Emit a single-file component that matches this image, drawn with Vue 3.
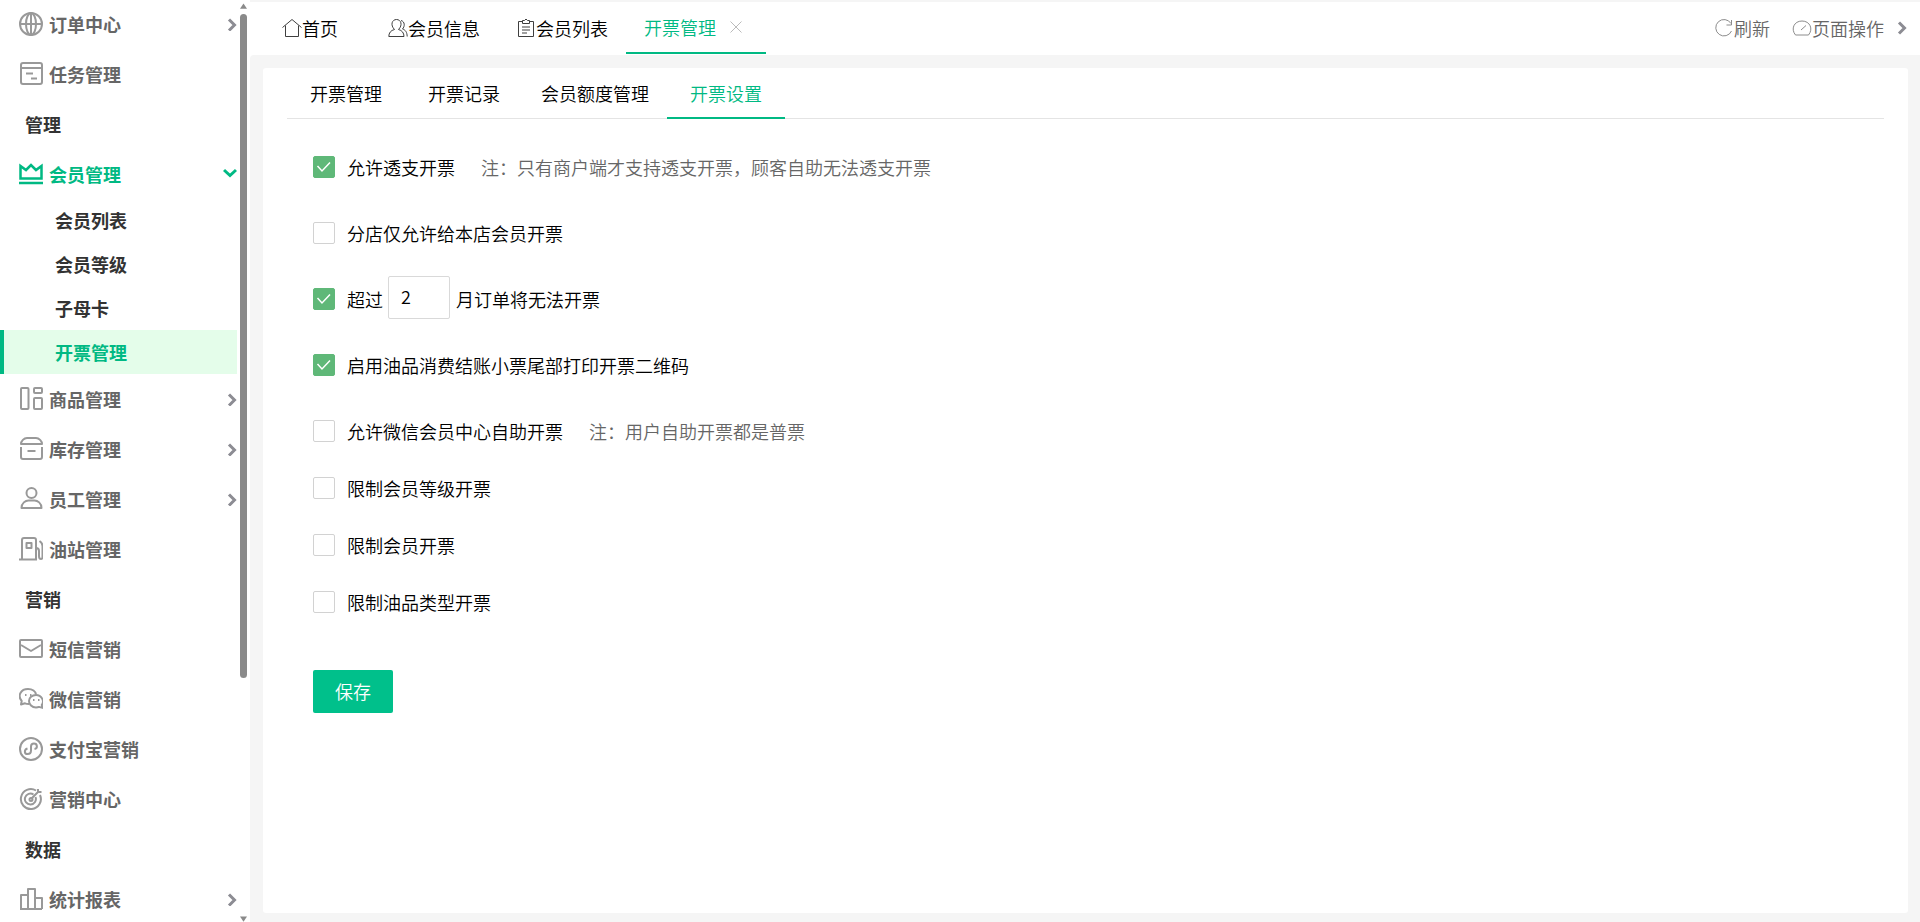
<script setup>
import { reactive, ref } from 'vue'

const menu = [
  { icon: 'globe', label: '订单中心', arrow: true },
  { icon: 'task', label: '任务管理' },
  { title: '管理' },
  {
    icon: 'crown',
    label: '会员管理',
    open: true,
    children: ['会员列表', '会员等级', '子母卡', '开票管理'],
  },
  { icon: 'goods', label: '商品管理', arrow: true },
  { icon: 'stock', label: '库存管理', arrow: true },
  { icon: 'staff', label: '员工管理', arrow: true },
  { icon: 'pump', label: '油站管理' },
  { title: '营销' },
  { icon: 'mail', label: '短信营销' },
  { icon: 'wechat', label: '微信营销' },
  { icon: 'alipay', label: '支付宝营销' },
  { icon: 'target', label: '营销中心' },
  { title: '数据' },
  { icon: 'chart', label: '统计报表', arrow: true },
]
const activeChild = '开票管理'

const innerTabs = ['开票管理', '开票记录', '会员额度管理', '开票设置']
const activeInner = ref('开票设置')

const months = ref('2')
const options = reactive([
  { id: 'overdraft', label: '允许透支开票', checked: true, note: '注：只有商户端才支持透支开票，顾客自助无法透支开票' },
  { id: 'branch', label: '分店仅允许给本店会员开票', checked: false },
  { id: 'expire', label: '超过', checked: true, suffix: '月订单将无法开票' },
  { id: 'qrcode', label: '启用油品消费结账小票尾部打印开票二维码', checked: true },
  { id: 'wechat', label: '允许微信会员中心自助开票', checked: false, note: '注：用户自助开票都是普票', tight: true },
  { id: 'level', label: '限制会员等级开票', checked: false, tight: true },
  { id: 'member', label: '限制会员开票', checked: false, tight: true },
  { id: 'oil', label: '限制油品类型开票', checked: false, tight: true },
])
</script>

<template>
  <div class="page">
    <aside class="sidebar">
      <nav class="menu">
        <template v-for="item in menu" :key="item.title || item.label">
          <h2 v-if="item.title" class="menu-title">{{ item.title }}</h2>
          <a v-else href="#" class="menu-item" :class="{ open: item.open }">
            <svg class="menu-icon" viewBox="0 0 24 24">
              <g v-if="item.icon === 'globe'">
                <circle cx="12" cy="12" r="11" />
                <ellipse cx="12" cy="12" rx="5" ry="11" />
                <path d="M1 12h22M12 1v22" />
              </g>
              <g v-else-if="item.icon === 'task'">
                <rect x="2" y="1" width="21" height="21" rx="2" />
                <path d="M2 6h21M7 11.500h7M12 16.500h6" />
              </g>
              <g v-else-if="item.icon === 'crown'" class="bold">
                <path d="M1.500 16.500V4l5.500 4 5-5 5 5 5.500-4v12.500zM0 21h24" />
              </g>
              <g v-else-if="item.icon === 'goods'">
                <rect x="2" y="1" width="7.500" height="21" rx="1" />
                <rect x="15" y="1" width="8" height="5" rx="1" />
                <rect x="15" y="11" width="8" height="11" rx="1" />
              </g>
              <g v-else-if="item.icon === 'stock'">
                <path d="M2 7c0-3 3-6 6-6h9c3 0 6 3 6 6zM2 10v10q0 2 2 2h17q2 0 2-2V10M8.500 14h8" />
              </g>
              <g v-else-if="item.icon === 'staff'">
                <circle cx="12.500" cy="6" r="5" />
                <path d="M2.500 21c0-5 4-7.500 7-7.500h6c3 0 7 2.500 7 7.500z" />
              </g>
              <g v-else-if="item.icon === 'pump'">
                <path d="M3 22.500V3q0-2 2-2h10q2 0 2 2v19.500M0 22.500h18M17 11c2.500 0 3 1 3 3v5q0 3 2 3c1.500 0 1.500-1 1.500-4V9q0-3-3-5" />
                <rect x="7.500" y="6" width="5" height="5" />
              </g>
              <g v-else-if="item.icon === 'mail'">
                <rect x="1" y="3" width="22" height="17" rx="1" />
                <path d="M2 8l10 6 10-6" />
              </g>
              <g v-else-if="item.icon === 'wechat'">
                <path d="M10 17c-1.500 0-3-.2-4-.7L2 17.500l.7-3.500C-2 8.500 2 2 9 2c4.500 0 7.500 2.500 8 5.500" />
                <path d="M17 8c-4 0-7 2.700-7 6s3 6.500 7 6.500c1.200 0 2.200-.2 3-.6l3.500 1-.7-3c3-4-.3-9.900-5.800-9.900z" />
                <path d="M6 8h1.500M11 8h1.500M14 13h1.500M19 13h1.500" />
              </g>
              <g v-else-if="item.icon === 'alipay'">
                <circle cx="12" cy="12" r="11" />
                <path d="M8.500 11.500c-3.500 1-3.500 5.500 0 5.500 2 0 3.500-1.500 3.500-3.500v-4C12 7.500 13.500 6.500 15 6.500c3.500 0 4 5 .5 5.500" />
              </g>
              <g v-else-if="item.icon === 'target'">
                <path d="M17 3.500A10 10 0 1 0 21 8M14.500 7.500a5.500 5.500 0 1 0 2 2.500" />
                <circle cx="12" cy="12.500" r="1.500" />
                <path d="M12 12l7-7V2M19 5h3.500" />
              </g>
              <g v-else>
                <path d="M2 22V8h7M9 22V2h7v20M16 11h7v11M1 22h22" />
              </g>
            </svg>
            <span class="menu-label">{{ item.label }}</span>
            <svg v-if="item.arrow" class="arrow" viewBox="0 0 14 14"><path d="M4 2.500L9.500 8 4 13.500" /></svg>
            <svg v-if="item.open" class="arrow" viewBox="0 0 14 14"><path d="M1 3l6 5.500L13 3" /></svg>
          </a>
          <div v-if="item.children" class="submenu">
            <a
              v-for="child in item.children"
              :key="child"
              href="#"
              class="sub-item"
              :class="{ active: child === activeChild }"
            >{{ child }}</a>
          </div>
        </template>
      </nav>
      <div class="scrollbar" aria-hidden="true">
        <svg class="scroll-arrow" viewBox="0 0 8 6"><path d="M4 0l4 6H0z" /></svg>
        <div class="track"><div class="thumb"></div></div>
        <svg class="scroll-arrow" viewBox="0 0 8 6"><path d="M0 0h8L4 6z" /></svg>
      </div>
    </aside>

    <div class="workspace">
      <header class="topbar">
        <nav class="tabs">
          <a href="#" class="tab home">
            <svg class="tab-icon" viewBox="0 0 20 20"><path d="M.5 9.500L10 1.500l9.500 8M3.500 7.500v11h13v-11" /></svg>首页
          </a>
          <a href="#" class="tab">
            <svg class="tab-icon" viewBox="0 0 20 20">
              <path d="M6.500 11.500C2 7 4 1.500 8.500 1.500S15 7 10.500 11.500c3.500.8 5.500 3.500 5.500 7H.8c0-3.500 2-6.200 5.700-7zM13 2.500c4 1 4 6 1.500 8.500 3 1 4.500 3 4.700 7.500" />
            </svg>会员信息
          </a>
          <a href="#" class="tab">
            <svg class="tab-icon" viewBox="0 0 20 20">
              <path d="M6 3.500H2.500v15h15v-15H14M6.500 5.500v-3h2l1.500-1.500 1.500 1.500h2v3zM6 9h8M6 12h8M6 15h5" />
            </svg>会员列表
          </a>
          <a href="#" class="tab current">
            开票管理
            <svg class="close" viewBox="0 0 14 14"><path d="M1.500 1.500l11 11M12.500 1.500l-11 11" /></svg>
          </a>
        </nav>
        <div class="tools">
          <a href="#" class="tool">
            <svg class="tab-icon" viewBox="0 0 20 20"><path d="M17.500 13A8.200 8.200 0 1 1 17 5.500M17.500 2v5h-5" /></svg>刷新
          </a>
          <a href="#" class="tool">
            <svg class="tab-icon" viewBox="0 0 20 20"><path d="M3.500 17C-1.500 11 2 3 10 3s11.500 8 6.500 14zM9 12l5-4.500" /></svg>页面操作
          </a>
          <svg class="arrow" viewBox="0 0 14 14"><path d="M4 1.500L9.500 7 4 12.500" /></svg>
        </div>
      </header>

      <main class="content">
        <section class="panel">
          <nav class="inner-tabs">
            <button
              v-for="tab in innerTabs"
              :key="tab"
              type="button"
              class="inner-tab"
              :class="{ current: tab === activeInner }"
              @click="activeInner = tab"
            >{{ tab }}</button>
          </nav>
          <form class="form" @submit.prevent>
            <div v-for="opt in options" :key="opt.id" class="row" :class="{ tight: opt.tight }">
              <span class="check">
                <input :id="opt.id" v-model="opt.checked" type="checkbox" />
                <svg viewBox="0 0 22 22" aria-hidden="true"><path d="M4.500 10l4.500 5 8-8.500" /></svg>
              </span>
              <label :for="opt.id">{{ opt.label }}</label>
              <template v-if="opt.suffix">
                <input v-model="months" class="months" type="text" aria-label="月数" />
                <span>{{ opt.suffix }}</span>
              </template>
              <span v-if="opt.note" class="note">{{ opt.note }}</span>
            </div>
            <button class="save" type="submit">保存</button>
          </form>
        </section>
      </main>
    </div>
  </div>
</template>

<style>
body {
  overflow: hidden;
}
</style>

<style scoped>
.page {
  --green: #00b983;
  display: flex;
  height: 100vh;
  background: #fff;
  color: #000;
  font: 350 18px/24px "Noto Sans CJK SC", sans-serif;
}
.page * {
  box-sizing: border-box;
}
a {
  color: inherit;
  text-decoration: none;
}
button,
input {
  margin: 0;
  font: inherit;
}
svg {
  display: block;
  flex: none;
  fill: none;
  stroke: currentColor;
}

.sidebar {
  display: flex;
  flex: none;
  width: 250px;
  overflow: hidden;
}
.menu {
  flex: 1;
  min-width: 0;
  margin-top: -1px;
  font-weight: 700;
}
.menu-title {
  margin: 0;
  padding-left: 25px;
  color: #333;
  font-size: 18px;
  line-height: 50px;
}
.menu-item {
  display: flex;
  align-items: center;
  gap: 6px;
  height: 50px;
  padding: 0 1px 0 19px;
  color: #666;
}
.menu-icon {
  width: 24px;
  height: 24px;
  color: #999;
  stroke-width: 2;
  stroke-linejoin: round;
}
.menu-icon .bold {
  stroke-width: 2.5;
  stroke-linejoin: miter;
}
.menu-label {
  flex: 1;
}
.menu-item.open,
.menu-item.open svg {
  color: var(--green);
}
.menu-item.open {
  padding-right: 3px;
}
.arrow {
  width: 14px;
  height: 14px;
  color: #8c8c93;
  stroke-width: 3;
}
.submenu {
  margin-top: -1px;
}
.sub-item {
  display: block;
  margin-right: 3px;
  padding-left: 51px;
  border-left: 4px solid transparent;
  color: #333;
  line-height: 44px;
}
.sub-item.active {
  border-color: var(--green);
  background: #e4fdea;
  color: var(--green);
}
.scrollbar {
  display: flex;
  flex: none;
  flex-direction: column;
  gap: 5px;
  width: 7px;
  margin-right: 3px;
  padding-top: 3px;
}
.scroll-arrow {
  width: 7px;
  height: 6px;
  fill: #8a8a8a;
  stroke: none;
}
.track {
  flex: 1;
}
.thumb {
  height: 74%;
  border-radius: 4px;
  background: #8a8a8a;
}

.workspace {
  display: flex;
  flex: 1;
  flex-direction: column;
  min-width: 0;
}
.topbar {
  display: flex;
  justify-content: space-between;
  height: 55px;
  border-top: 2px solid #f5f5f5;
}
.tabs {
  display: flex;
}
.tab {
  display: flex;
  align-items: center;
  padding: 0 18px;
  border-bottom: 2px solid transparent;
}
.tab.home {
  justify-content: center;
  width: 120px;
}
.tab.current {
  gap: 13px;
  min-width: 140px;
  margin-bottom: 1px;
  border-color: var(--green);
  color: var(--green);
}
.tab-icon {
  width: 20px;
  height: 20px;
  opacity: 0.75;
}
.close {
  width: 14px;
  height: 14px;
  color: #bbb;
}
.tools {
  display: flex;
  align-items: center;
  padding: 0 11px 2px 0;
  color: #666;
}
.tool {
  display: flex;
  align-items: center;
  margin-right: 22px;
}
.tool:nth-child(2) {
  margin-right: 11px;
}

.content {
  flex: 1;
  padding: 13px 12px 9px 13px;
  border-radius: 4px 0 0;
  background: #f5f5f5;
}
.panel {
  height: 100%;
  padding: 0 24px;
  border-radius: 3px;
  background: #fff;
}
.inner-tabs {
  display: flex;
  height: 51px;
  border-bottom: 1px solid #e4e4e4;
}
.inner-tab {
  min-width: 118px;
  height: 51px;
  padding: 0 18px;
  border: 0;
  border-bottom: 2px solid transparent;
  background: none;
  color: #000;
}
.inner-tab.current {
  border-color: var(--green);
  color: var(--green);
}
.form {
  padding: 26px;
}
.row {
  display: flex;
  align-items: center;
  height: 44px;
  margin-bottom: 22px;
}
.row.tight {
  margin-bottom: 13px;
}
.check {
  display: grid;
  margin-right: 12px;
}
.check input,
.check svg {
  grid-area: 1 / 1;
  width: 22px;
  height: 22px;
}
.check input {
  appearance: none;
  border: 1px solid #d2d2d2;
  border-radius: 2px;
  background: #fff;
}
.check input:checked {
  border-color: #5fb878;
  background: #5fb878;
}
.check svg {
  color: #fff;
  stroke-width: 1.5;
  pointer-events: none;
}
.months {
  width: 62px;
  height: 43px;
  margin: 0 6px 3px 5px;
  padding: 0 12px 4px;
  border: 1px solid #d9d9d9;
  border-radius: 2px;
  background: #fff;
  color: #000;
}
.note {
  margin-left: 26px;
  color: #666;
}
.save {
  width: 80px;
  height: 43px;
  margin-top: 33px;
  padding: 0 0 2px;
  border: 0;
  border-radius: 2px;
  background: #00c08b;
  color: #fff;
}
</style>
